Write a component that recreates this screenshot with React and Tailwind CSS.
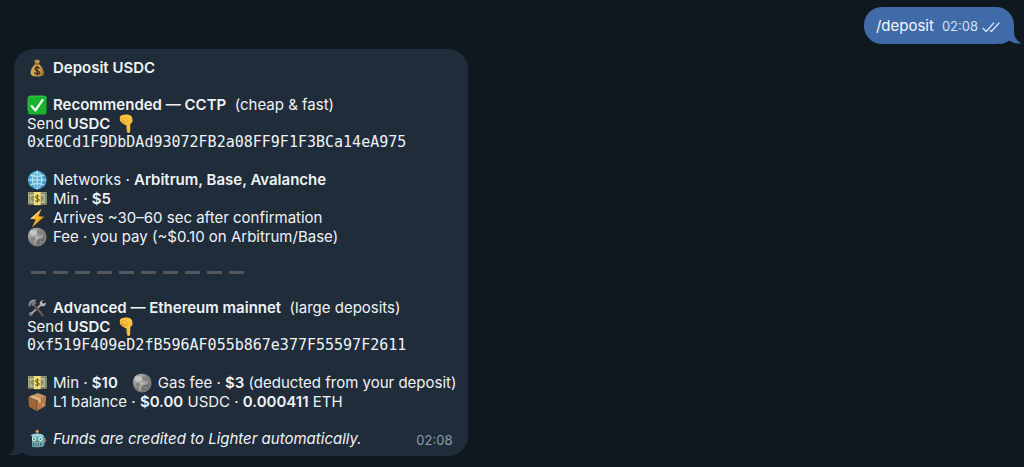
const DEPOSIT_COMMAND = "/deposit";
const CCTP_ADDRESS = "0xE0Cd1F9DbDAd93072FB2a08FF9F1F3BCa14eA975";
const MAINNET_ADDRESS = "0xf519F409eD2fB596AF055b867e377F55597F2611";

// Emoji artwork, all on a 20x20 grid
const EMOJI = {
  moneyBag: (
    <>
      <path d="M7.2 1.800 9 2.600l1.200-1.600L11.400 2.600l1.600-.6-1.200 4H8.400z" fill="#c79a4b" />
      <path d="M8.300 6h3.700c2.400 1.900 4.600 5.300 4.600 8.500 0 3-1.800 4-6.500 4s-6.500-1-6.500-4C3.600 11.300 5.900 7.900 8.300 6z" fill="#d0a556" />
      <path d="M13 7.200c2 2 3.600 4.800 3.600 7.300 0 3-1.800 4-6.500 4 4.200-2.500 4.600-6.800 2.900-11.300z" fill="#a87a35" />
      <path d="M7.800 5.900h4.700" stroke="#7c5523" strokeWidth="1.200" strokeLinecap="round" />
      <path d="M12.300 10.300c-.5-.8-1.300-1.100-2.200-1.100-1.300 0-2.200.6-2.200 1.600 0 2.400 4.600 1.100 4.600 3.500 0 1-1 1.700-2.300 1.700-1.100 0-2-.4-2.500-1.300M10.100 8v9.200" fill="none" stroke="#33230d" strokeWidth="1.200" strokeLinecap="round" />
    </>
  ),
  check: (
    <>
      <rect x="1" y="1" width="18.500" height="18.500" rx="2.500" fill="#16b32b" />
      <path d="M1 15.500V3.500A2.500 2.500 0 0 1 3.500 1H17A2.500 2.500 0 0 1 19.500 3.500" fill="none" stroke="#4ad35b" strokeWidth=".8" />
      <path d="m4.600 11 3.900 4.400L15.600 4.800" fill="none" stroke="#fff" strokeWidth="2.200" strokeLinecap="round" strokeLinejoin="round" />
    </>
  ),
  pointDown: (
    <>
      <path d="M5.200 1.600C8 .2 12.500.3 14.500 1.600c1.700 1.200 2.100 3.200 2 5.200-.1 1.700-.9 2.900-2.200 2.900l-.1 7.600c-.1 2.200-2.900 2.200-3.100.1L10.600 11c-1 .3-1.900 0-2.300-.8-1 .1-1.800-.4-2.200-1.400C4.500 8.300 3.900 6.800 3.800 5 3.700 3.500 4.100 2.200 5.200 1.600z" fill="#fdc13b" />
      <path d="M6.100 8.800 5.700 5.300M8.300 10.200l-.5-3.500" fill="none" stroke="#d88b1c" strokeWidth=".8" strokeLinecap="round" />
      <path d="M5.500 4.200c2.600-.6 4.700.3 6 2.200.7 1.200-.2 2.100-1.400 1.500L7.600 6.400" fill="#ffd15a" stroke="#dc921f" strokeWidth=".7" strokeLinecap="round" />
      <path d="m10.600 11 .5 6.300" fill="none" stroke="#e79b24" strokeWidth=".7" />
    </>
  ),
  globe: (
    <>
      <circle cx="10.200" cy="10" r="9.300" fill="#3d9ccb" />
      <circle cx="9.500" cy="8.800" r="7" fill="#58b2da" />
      <path d="M10.200.9v18.200M1 10h18.400M2.900 5c4.200 1.800 10.400 1.800 14.600 0M2.900 15c4.200-1.800 10.400-1.800 14.600 0M10.200.9C4 5.500 4 14.500 10.200 19.100M10.200.9c6.200 4.600 6.200 13.600 0 18.200" fill="none" stroke="#d2edf5" strokeWidth=".9" />
    </>
  ),
  banknote: (
    <>
      <rect x="1" y="3.200" width="18.600" height="12.800" fill="#b9b994" />
      <rect x="2.200" y="4.500" width="16.200" height="10.200" fill="none" stroke="#74785d" strokeWidth=".8" />
      <ellipse cx="10.300" cy="9.600" rx="6.800" ry="4.200" fill="#8c8e70" />
      <path d="M1 14.800h18.600V16H1z" fill="#77775e" />
      <rect x="6.900" y="3" width="6.800" height="13.200" fill="#f2df78" />
      <path d="M12.100 7.600c-.3-.7-1-1-1.800-1-1.100 0-1.800.6-1.800 1.400 0 1.900 3.700 1.100 3.700 3 0 .9-.8 1.500-1.900 1.500-.9 0-1.600-.4-1.900-1.100M10.300 5.600v8" fill="none" stroke="#5e4a17" strokeWidth="1" />
    </>
  ),
  bolt: (
    <>
      <path d="M14.600.8 3.400 10.800l5.400.7L5 19.200l12-10.400-5.600-.6z" fill="#f8b62d" />
      <path d="M14.600.8 3.400 10.800l2 .3z" fill="#ffe07a" />
      <path d="M17 8.800 5 19.200l8.500-9.500z" fill="#e3861c" />
    </>
  ),
  moon: (
    <>
      <circle cx="10.200" cy="10" r="9.400" fill="#7e7d7c" />
      <circle cx="8.400" cy="8.200" r="7.300" fill="#a3a2a0" />
      <ellipse cx="6.400" cy="5.800" rx="3.600" ry="2.800" fill="#c6c5c3" />
      <path d="M10.500 3.500c2-.8 4.600 0 5.400 2.200.5 2-1 3-2.700 2.600-1.800-.4-4-2.800-2.700-4.800zM3.700 10.500c2-1 4 0 4.300 1.700.2 1.700-1.500 2.500-2.900 1.800-1.200-.6-2-2.300-1.400-3.500z" fill="#848381" />
      <path d="M11 12.500c2.200-1.300 4.700-.6 6.500-2.300-.2 4.300-3.300 7-7 7.200-1.700-1.400-1.300-3.700.5-4.900z" fill="#706f6d" />
      <circle cx="10" cy="10.400" r="1" fill="#d0cfcd" />
      <circle cx="8" cy="16.300" r=".9" fill="#c0bfbd" />
      <circle cx="13.600" cy="14.800" r=".7" fill="#a9a8a6" />
    </>
  ),
  tools: (
    <>
      <path d="M3.700 16.300 15.100 5.800" stroke="#a09d9b" strokeWidth="2.200" strokeLinecap="round" />
      <path d="M18.800 4.400c.5 2.300-1.300 4.300-3.500 3.900-2.200-.4-3.300-2.900-2-4.800.7-1.200 2-1.700 3.200-1.600l-1.800 2.200 1.500 1.700z" fill="#b4b1af" />
      <circle cx="3.900" cy="16" r="1.800" fill="#aaa7a4" />
      <circle cx="3.700" cy="16.200" r=".7" fill="#273240" />
      <path d="m6.500 6.500 9.300 11" stroke="#5b4a42" strokeWidth="2.600" strokeLinecap="round" />
      <path d="m6.700 6.500 8.800 10.200" stroke="#89756a" strokeWidth=".8" />
      <path d="m1 7.500 1.100-3C3.600 2.200 6 1.300 9.300 1.700L7.900 3.100l1.500 2-3.500 3.100-1.700-1.900-1.700 2.600z" fill="#77787a" />
      <path d="M2.200 4.900C3.700 2.800 6 2 8.500 2.100" fill="none" stroke="#b3b4b5" strokeWidth=".8" />
    </>
  ),
  parcel: (
    <>
      <path d="M1.300 5 10.800 1l8.400 3.200-9.500 4.500z" fill="#c99663" />
      <path d="M1.300 5 9.700 8.700V19L2 14.800z" fill="#9c673b" />
      <path d="m19.200 4.200-9.500 4.500V19l8.700-4.800z" fill="#b67b48" />
      <path d="m5 3.500 8.600 3.400v3.800l-2-.1V7.700L3.300 4.200z" fill="#e7c599" />
      <path d="M9.700 8.700V19" stroke="#744722" strokeWidth=".6" />
      <path d="m15.500 12 1.500-.8v1.900l-1.500.8z" fill="#d9ad7c" />
    </>
  ),
  robot: (
    <>
      <path d="M10.200 3v3" stroke="#a8aaa9" strokeWidth="1.200" />
      <circle cx="10.200" cy="2.300" r="1.500" fill="#df9a57" />
      <rect x="1.700" y="9.200" width="17" height="4.400" rx="1.200" fill="#d17452" />
      <path d="M3 8.300C3 5.800 6 4.500 10.200 4.500s7.200 1.300 7.200 3.800v7c0 2.300-2.500 3-7.200 3s-7.200-.7-7.200-3z" fill="#66a9b2" />
      <path d="M4 7.600c0-1.700 2.700-2.500 6.200-2.500s6.200.8 6.200 2.500z" fill="#a6d5d8" />
      <circle cx="6.900" cy="10" r="2.100" fill="#eaf7f7" />
      <circle cx="13.500" cy="10" r="2.100" fill="#eaf7f7" />
      <circle cx="6.900" cy="10" r="1" fill="#287e8b" />
      <circle cx="13.500" cy="10" r="1" fill="#287e8b" />
      <path d="m10.200 11 1.200 2.100H9z" fill="#d6503b" />
      <rect x="6" y="14.200" width="8.400" height="2.200" rx=".7" fill="#3d5961" />
      <path d="M8 14.200v2.200M10.200 14.200v2.200M12.400 14.200v2.200" stroke="#cbe1e2" strokeWidth=".8" />
    </>
  ),
};

function Emoji({ name, label }) {
  return (
    <svg role="img" aria-label={label} viewBox="0 0 20 20" className="h-5 w-5 shrink-0">
      {EMOJI[name]}
    </svg>
  );
}

// One message line that starts with an emoji
function Line({ icon, label, children }) {
  return (
    <p className="flex h-[19px] items-center gap-1.5 whitespace-nowrap">
      <Emoji name={icon} label={label} />
      <span>{children}</span>
    </p>
  );
}

function Bold({ children }) {
  return <strong className="font-semibold">{children}</strong>;
}

function SendTo({ address }) {
  return (
    <>
      <p className="flex h-[19px] items-center gap-1.5">
        <span>Send <Bold>USDC</Bold></span>
        <Emoji name="pointDown" label="pointing down" />
      </p>
      <p className="font-['DejaVu_Sans_Mono',monospace] whitespace-nowrap">{address}</p>
    </>
  );
}

function OutgoingMessage() {
  return (
    <div className="relative flex h-[37px] items-center gap-2 rounded-[18px] bg-[#406aa8] pr-3.5 pl-3 text-[#f4f8fd]">
      <p>{DEPOSIT_COMMAND}</p>
      <div className="flex items-center gap-1 pt-0.5 text-[13px] text-[#d3e2f5]">
        <time>02:08</time>
        <svg role="img" aria-label="Read" viewBox="0 0 18 12" className="h-3 w-[18px]" fill="none" stroke="currentColor" strokeWidth="1.3" strokeLinecap="round" strokeLinejoin="round">
          <path d="m1 7.200 3.200 3.300L11.700 2M8.500 9.500l.9 1L17 2" />
        </svg>
      </div>
      <svg aria-hidden="true" viewBox="0 0 22 20" className="absolute -right-2 bottom-0 h-5 w-[22px] fill-[#406aa8]">
        <path d="M14 0v8c0 5 3 9 7.500 11.200-4.500.8-9-.2-12-2.700C6.500 18.300 3 20 0 20V0z" />
      </svg>
    </div>
  );
}

function IncomingMessage() {
  return (
    <article className="relative flex flex-col gap-[18px] rounded-[20px] bg-[#202c3a] px-3 pt-[9px] pb-2 pl-[13px]">
      <svg aria-hidden="true" viewBox="0 0 24 20" className="absolute bottom-0 -left-1.5 h-5 w-6 fill-[#202c3a]">
        <path d="M6 0v8c0 5-2 9-6 10.800 4.800 1.200 10 .5 14-2.300 3 2.300 6 3.500 10 3.500V0z" />
      </svg>

      <Line icon="moneyBag" label="money bag"><Bold>Deposit USDC</Bold></Line>

      <section>
        <Line icon="check" label="check mark">
          <Bold>Recommended — CCTP</Bold>&nbsp; (cheap &amp; fast)
        </Line>
        <SendTo address={CCTP_ADDRESS} />
      </section>

      <section>
        <Line icon="globe" label="globe">Networks · <Bold>Arbitrum, Base, Avalanche</Bold></Line>
        <Line icon="banknote" label="banknote">Min · <Bold>$5</Bold></Line>
        <Line icon="bolt" label="lightning">Arrives ~30–60 sec after confirmation</Line>
        <Line icon="moon" label="moon">Fee · you pay (~$0.10 on Arbitrum/Base)</Line>
      </section>

      <div role="separator" className="flex h-4 items-center gap-[7px] pl-1">
        {Array.from({ length: 10 }, (_, i) => (
          <span key={i} className="h-[3px] w-[15px] bg-[#53575c]" />
        ))}
      </div>

      <section>
        <Line icon="tools" label="hammer and wrench">
          <Bold>Advanced — Ethereum mainnet</Bold>&nbsp; (large deposits)
        </Line>
        <SendTo address={MAINNET_ADDRESS} />
      </section>

      <section>
        <div className="flex gap-3.5">
          <Line icon="banknote" label="banknote">Min · <Bold>$10</Bold></Line>
          <Line icon="moon" label="moon">Gas fee · <Bold>$3</Bold> (deducted from your deposit)</Line>
        </div>
        <Line icon="parcel" label="package">
          L1 balance · <Bold>$0.00</Bold> USDC · <Bold>0.000411</Bold> ETH
        </Line>
      </section>

      <footer className="flex h-[19px] items-center justify-between pr-1">
        <Line icon="robot" label="robot"><em>Funds are credited to Lighter automatically.</em></Line>
        <time className="pt-1 text-[13px] text-[#8d9aa8]">02:08</time>
      </footer>
    </article>
  );
}

export default function App() {
  return (
    <main className="flex min-h-screen flex-col bg-[#10181f] pt-[7px] pr-2.5 pb-2.5 pl-3.5 font-['Inter',sans-serif] text-[15px] leading-[19px] text-[#eef2f6]">
      <div className="flex justify-end pb-[5px]">
        <OutgoingMessage />
      </div>
      <div className="flex">
        <IncomingMessage />
      </div>
    </main>
  );
}
